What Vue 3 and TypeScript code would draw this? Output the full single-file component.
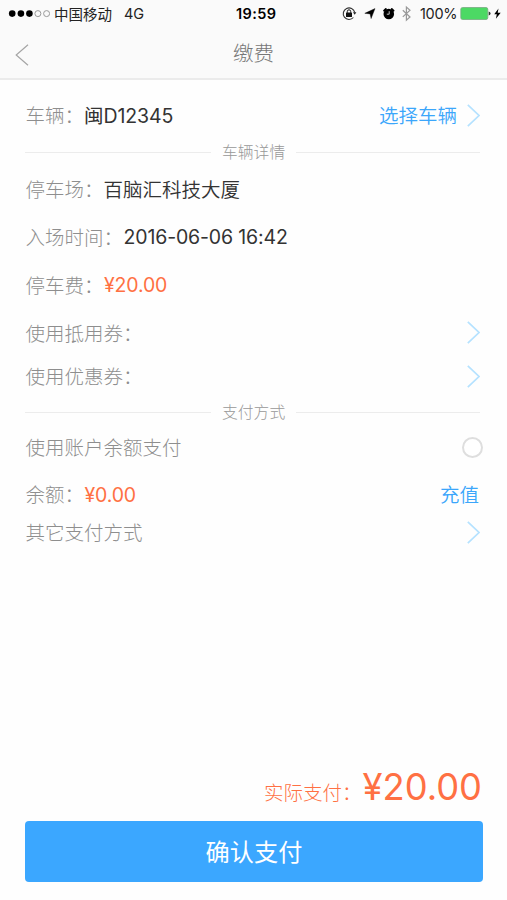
<script setup lang="ts">
import { ref } from 'vue'

interface InfoRow {
  label: string
  value: string
  kind: 'place' | 'time' | 'fee'
}

const plate = '闽D12345'
const details: InfoRow[] = [
  { label: '停车场：', value: '百脑汇科技大厦', kind: 'place' },
  { label: '入场时间：', value: '2016-06-06 16:42', kind: 'time' },
  { label: '停车费：', value: '¥20.00', kind: 'fee' },
]
const useBalance = ref(false)
</script>

<template>
  <main class="screen" lang="zh-CN">
    <header class="top">
      <div class="status">
        <svg class="signal" width="42" height="10" viewBox="0 0 42 10">
          <g fill="#000"><circle cx="4.2" cy="4.6" r="3.3" /><circle cx="12.9" cy="4.6" r="3.3" /><circle cx="21.4" cy="4.6" r="3.3" /></g>
          <g fill="none" stroke="#999" stroke-width="1"><circle cx="29.9" cy="4.6" r="3" /><circle cx="38.6" cy="4.6" r="3" /></g>
        </svg>
        <span class="carrier">中国移动</span>
        <span class="network">4G</span>
        <span class="clock">19:59</span>
        <svg class="glyphs" width="72" height="18" viewBox="342 5 72 18">
          <path d="M353.4 17.5A5.8 5.8 0 1 1 354.7 12.3" fill="none" stroke="#333" stroke-width="1.1" />
          <path d="M353 12.3h3.4l-1.7 2.5z" fill="#222" />
          <rect x="346" y="12.6" width="6" height="4.3" rx=".5" fill="#111" />
          <path d="M347.3 12.8v-1.3a1.7 1.7 0 0 1 3.4 0v1.3" fill="none" stroke="#111" stroke-width="1" />
          <path d="M375 8.6L371.1 18.6L370.1 13.9L364.8 13.3z" fill="#000" stroke="#000" stroke-width=".4" />
          <circle cx="388.8" cy="14" r="5.3" fill="#000" />
          <path d="M384.1 10.7l1.8-1.6M393.5 10.7l-1.8-1.6" stroke="#000" stroke-width="2" stroke-linecap="round" />
          <path d="M389.2 11.2v3h-2.4" fill="none" stroke="#ddd" stroke-width=".9" />
          <path d="M402.8 10.3l7.2 6.7-3.6 3.2V7l3.6 3.2-7.2 6.7" fill="none" stroke="#999" stroke-width="1.2" />
        </svg>
        <span class="percent">100%</span>
        <svg class="battery" width="42" height="16" viewBox="460 6 42 16">
          <rect x="460.8" y="7.5" width="27" height="12" rx="1.8" fill="#4cd964" stroke="#79a981" stroke-width=".8" />
          <path d="M488.7 11.6q1.9.3 1.9 2t-1.9 2z" fill="#333" />
          <path d="M498.5 8.6l-4.3 5.7h2.6l-.9 4.5 4.8-6h-3z" fill="#000" />
        </svg>
      </div>
      <nav class="nav">
        <svg class="back" width="14" height="22" viewBox="0 0 14 22"><path d="M13 .8L1.2 11 13 21.2" fill="none" stroke="#a5a5a5" stroke-width="1.2" /></svg>
        <h1>缴费</h1>
      </nav>
    </header>

    <section class="content">
      <div class="row first">
        <span class="label">车辆：</span><span class="value plate">{{ plate }}</span>
        <a class="action">选择车辆</a>
        <svg class="chevron" width="13" height="23" viewBox="0 0 13 23"><path d="M.8.8L12 11.5.8 22.2" /></svg>
      </div>
      <div class="divider"><span>车辆详情</span></div>
      <div v-for="item in details" :key="item.label" class="row">
        <span class="label">{{ item.label }}</span><span class="value" :class="item.kind">{{ item.value }}</span>
      </div>
      <div class="row voucher">
        <span class="label">使用抵用券：</span>
        <svg class="chevron" width="13" height="23" viewBox="0 0 13 23"><path d="M.8.8L12 11.5.8 22.2" /></svg>
      </div>
      <div class="row coupon">
        <span class="label">使用优惠券：</span>
        <svg class="chevron" width="13" height="23" viewBox="0 0 13 23"><path d="M.8.8L12 11.5.8 22.2" /></svg>
      </div>
      <div class="divider payment"><span>支付方式</span></div>
      <div class="row account">
        <span class="label">使用账户余额支付</span>
        <button class="radio" :class="{ on: useBalance }" @click="useBalance = !useBalance"></button>
      </div>
      <div class="row balance">
        <span class="label">余额：</span><span class="value fee">¥0.00</span>
        <a class="action recharge">充值</a>
      </div>
      <div class="row other">
        <span class="label">其它支付方式</span>
        <svg class="chevron" width="13" height="23" viewBox="0 0 13 23"><path d="M.8.8L12 11.5.8 22.2" /></svg>
      </div>
    </section>

    <footer class="footer">
      <div class="total"><span class="total-label">实际支付：</span><span class="total-price">¥20.00</span></div>
      <button class="confirm">确认支付</button>
    </footer>
  </main>
</template>

<style>
body { background: #fefefe; }
</style>

<style scoped>
.screen {
  box-sizing: border-box;
  display: flex;
  flex-direction: column;
  height: 900px;
  background: #fefefe;
  font-family: Inter, "Noto Sans CJK SC", sans-serif;
}
.top {
  box-sizing: border-box;
  height: 80px;
  background: #fafafa;
  border-bottom: 2px solid #ebebeb;
}
.status {
  display: flex;
  align-items: center;
  height: 27px;
  padding-left: 8px;
  font-size: 14.5px;
  line-height: 27px;
  color: #222;
  white-space: nowrap;
}
.signal { margin-right: 4px; flex: none; }
.carrier { width: 70px; padding-bottom: 1px; font-family: "Noto Sans CJK SC", sans-serif; }
.network { width: 112px; letter-spacing: -0.2px; }
.clock { width: 106px; color: #000; font-weight: 600; letter-spacing: 0.4px; }
.glyphs { flex: none; margin-right: 6px; }
.percent { width: 40px; letter-spacing: -0.3px; }
.battery { flex: none; }
.nav {
  display: grid;
  grid-template-columns: 40px 1fr 40px;
  align-items: center;
  height: 51px;
}
.back { margin: 4px 0 0 15px; }
h1 {
  margin: 0;
  text-align: center;
  font-family: "Noto Sans CJK SC", sans-serif;
  font-size: 20.5px;
  font-weight: 300;
  line-height: 51px;
  color: #777;
}
.content { padding: 12px 27px 0 25.5px; }
.row {
  display: flex;
  align-items: center;
  height: 48px;
  font-size: 19.5px;
  line-height: 30px;
  white-space: nowrap;
}
.row.first { height: 47px; }
.row.coupon { height: 38px; }
.row.account { height: 36px; }
.row.balance { height: 37px; margin-top: 11px; }
.row.other { height: 38px; }
.label {
  padding-bottom: 1px;
  font-family: "Noto Sans CJK SC", sans-serif;
  font-weight: 300;
  color: #8e8e8e;
}
.value { color: #333; }
.value.plate { letter-spacing: -0.1px; }
.value.place { font-family: "Noto Sans CJK SC", sans-serif; font-weight: 350; }
.value.time { margin-left: 0.5px; letter-spacing: -0.15px; }
.value.fee { margin-left: 0.5px; color: #ff7043; letter-spacing: -0.15px; }
.action {
  margin-left: auto;
  padding-bottom: 2px;
  color: #3ba6fb;
  font-family: "Noto Sans CJK SC", sans-serif;
  font-weight: 350;
}
.action + .chevron { margin-left: 10px; }
.recharge { margin-right: 1px; }
.chevron {
  flex: none;
  margin-left: auto;
  fill: none;
  stroke: #b5e2ff;
  stroke-width: 1.7;
}
.voucher .chevron { margin-bottom: 2px; }
.divider {
  display: flex;
  align-items: center;
  gap: 11px;
  height: 26px;
  margin-left: -0.5px;
  color: #989898;
  font-family: "Noto Sans CJK SC", sans-serif;
  font-size: 15.8px;
  font-weight: 300;
  line-height: 24px;
}
.divider span { padding-bottom: 1px; }
.divider::before, .divider::after { content: ""; flex: 1; height: 1px; background: #ececec; }
.divider::before { flex: 0 0 186px; }
.divider.payment { height: 34px; }
.radio {
  box-sizing: border-box;
  width: 21px;
  height: 21px;
  margin: 0 -3px 0 auto;
  padding: 0;
  border: 2px solid #dedede;
  border-radius: 50%;
  background: #fff;
}
.radio.on { border: 6px solid #3ba7ff; }
.footer { margin-top: auto; padding: 0 24px 18px 25px; }
.total {
  display: flex;
  justify-content: flex-end;
  align-items: baseline;
  height: 59px;
  padding-right: 1px;
  line-height: 50px;
  color: #ff7043;
  white-space: nowrap;
}
.total-label { margin-right: 1px; font-family: "Noto Sans CJK SC", sans-serif; font-size: 19.5px; font-weight: 300; }
.total-price { font-size: 36.3px; }
.confirm {
  display: block;
  width: 100%;
  height: 61px;
  padding: 0 0 2px;
  border: 0;
  border-radius: 4px;
  background: #3ba7ff;
  color: #fff;
  font-family: "Noto Sans CJK SC", sans-serif;
  font-size: 24.2px;
  line-height: 59px;
}
</style>
